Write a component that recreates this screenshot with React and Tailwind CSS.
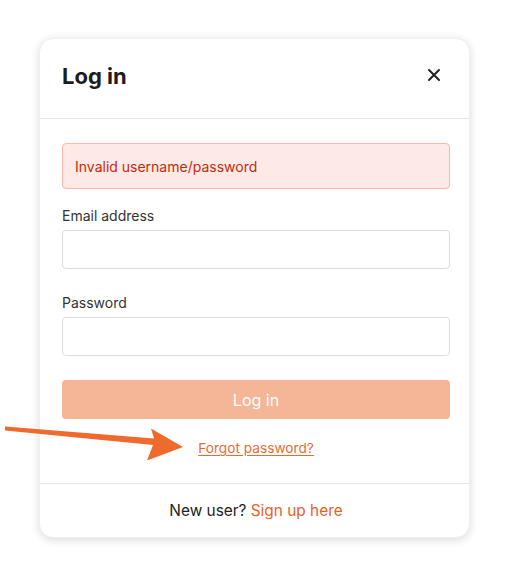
export default function App() {
  return (
    <div className="relative min-h-screen bg-white pl-[39px] pt-[38px] font-['Inter','Liberation_Sans',sans-serif]">
      <div className="w-[431px] rounded-[14px] bg-white shadow-[0_2px_10px_rgba(0,0,0,0.14)] border border-[#efefef]">
        <div className="flex h-[80px] items-center justify-between pl-[22px] pr-[28px] border-b border-[#e6e6e6]">
          <h1 className="text-[22px] font-bold text-[#1c1c1c] -mt-[4px]">Log in</h1>
          <button className="text-[#222] -mt-[8px]">
            <svg width="14" height="14" viewBox="0 0 14 14" fill="none" stroke="currentColor" strokeWidth="2" strokeLinecap="round">
              <path d="M2 2L12 12M12 2L2 12" />
            </svg>
          </button>
        </div>

        <div className="pl-[22px] pr-[19px] pt-[24px] pb-[25px]">
          <div className="flex h-[46px] items-center rounded-[4px] border border-[#f9b9aa] bg-[#fde9e5] px-[12px] text-[14px] text-[#c42b0c]">
            Invalid username/password
          </div>

          <label className="mt-[17px] block text-[14px] leading-[20px] text-[#333]">Email address</label>
          <input type="email" className="mt-[4px] block h-[39px] w-full rounded-[4px] border border-[#dcdcdc] bg-white" />

          <label className="mt-[24px] block text-[14px] leading-[20px] text-[#333]">Password</label>
          <input type="password" className="mt-[4px] block h-[39px] w-full rounded-[4px] border border-[#dcdcdc] bg-white" />

          <button className="mt-[24px] block h-[39px] w-full rounded-[4px] bg-[#f5b597] text-[16px] text-white">
            Log in
          </button>

          <div className="mt-[19px] text-center text-[13.7px] leading-[20px]">
            <a href="#" className="text-[#ea6a35] underline underline-offset-2">Forgot password?</a>
          </div>
        </div>

        <div className="flex h-[54px] items-center justify-center pl-[22px] pr-[19px] pb-[1px] border-t border-[#e6e6e6] text-[15.4px] text-[#222]">
          <span className="mt-[2px]">
            New user? <a href="#" className="text-[#e5622a]">Sign up here</a>
          </span>
        </div>
      </div>

      <svg className="absolute left-0 top-0 pointer-events-none" width="200" height="470" viewBox="0 0 200 470">
        <polygon
          points="5,426.5 154,438.5 151,428.5 183,447 147,460.5 153,445 5,430.5"
          fill="#ee6b2d"
        />
      </svg>
    </div>
  )
}
